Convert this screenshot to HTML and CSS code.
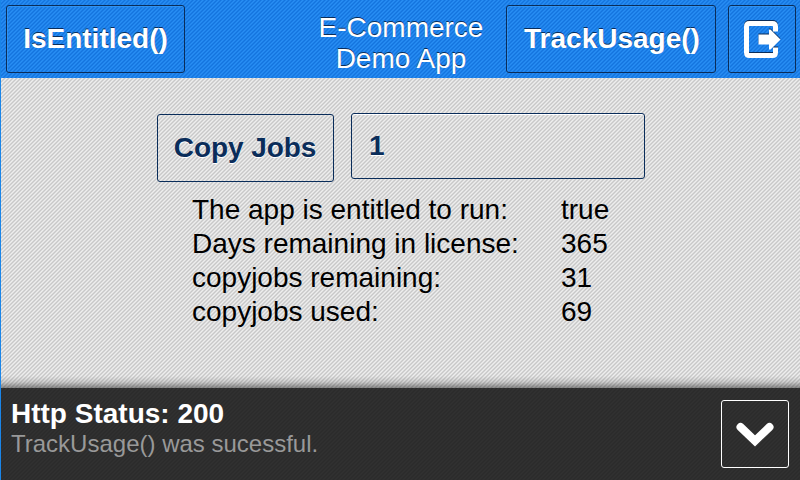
FILE: index.html
```html
<!DOCTYPE html>
<html lang="en">
<head>
<meta charset="utf-8">
<title>E-Commerce Demo App</title>
<link rel="stylesheet" href="styles.css">
</head>
<body>
<div class="app">
  <header class="toolbar">
    <button class="btn entitled">IsEntitled()</button>
    <h1 class="title">E-Commerce<br>Demo App</h1>
    <button class="btn track">TrackUsage()</button>
    <button class="btn exit" aria-label="Exit">
      <svg width="40" height="40" viewBox="0 0 40 40">
        <path d="M33.500 12.500V7.500Q33.500 4.500 30.500 4.500H7.500Q4.500 4.500 4.500 7.500V33.500Q4.500 36.500 7.500 36.500H30.500Q33.500 36.500 33.500 33.500V28.500" fill="none" stroke="#fff" stroke-width="5"/>
        <path d="M16.500 15.500H27V10.500H28.500L38.500 20.500L28.500 30.500H27V25.500H16.500Z" fill="#fff"/>
      </svg>
    </button>
  </header>
  <main class="content">
    <div class="form">
      <button class="btn copy">Copy Jobs</button>
      <input class="field" type="text" value="1" aria-label="Copy jobs count">
    </div>
    <dl class="facts">
      <dt>The app is entitled to run:</dt><dd>true</dd>
      <dt>Days remaining in license:</dt><dd>365</dd>
      <dt>copyjobs remaining:</dt><dd>31</dd>
      <dt>copyjobs used:</dt><dd>69</dd>
    </dl>
  </main>
  <footer class="status">
    <div class="status-text">
      <div class="status-title">Http Status: 200</div>
      <div class="status-message">TrackUsage() was sucessful.</div>
    </div>
    <button class="btn collapse" aria-label="Collapse">
      <svg width="40" height="28" viewBox="0 0 40 28">
        <path d="M5.500 7L20 21L34.500 7" fill="none" stroke="#fff" stroke-width="8" stroke-linecap="round"/>
      </svg>
    </button>
  </footer>
</div>
</body>
</html>
```

FILE: styles.css
```css
* { box-sizing: border-box; }
body {
  margin: 0;
  background: #1a85e8;
  font-family: "Liberation Sans", Arial, sans-serif;
  font-size: 28px;
}
.app {
  display: flex;
  flex-direction: column;
  width: 800px;
  height: 480px;
  padding-left: 1px;
  overflow: hidden;
}
.btn {
  display: flex;
  align-items: center;
  justify-content: center;
  height: 68px;
  padding: 0;
  border: 1px solid #0a2d5a;
  border-radius: 3px;
  background: none;
  font: bold 28px/32px "Liberation Sans", Arial, sans-serif;
  white-space: nowrap;
}
.toolbar {
  display: flex;
  flex: none;
  height: 78px;
  padding: 5px 4px 0 5px;
  color: #fff;
  text-shadow: 0 -1px 0 #0a2d5a;
  background: linear-gradient(135deg, #1474de, #288ef4 25%, #1474de 50%, #288ef4 75%, #1474de) 0 0 / 4px 4px;
}
.toolbar .btn {
  color: #fff;
  text-shadow: 0 -1px 0 #0a2d5a;
  box-shadow: inset 1px 1px 0 #3092f2;
}
.entitled { width: 179px; }
.title {
  flex: 1;
  margin: 7px 0 0 111px;
  font-size: 28px;
  font-weight: normal;
  line-height: 31px;
  text-align: center;
}
.track { width: 210px; margin-right: 12px; }
.toolbar .track { padding-left: 2px; }
.exit { width: 68px; }
.exit svg { filter: drop-shadow(0 -1px 0 #0a2d5a); }
.content {
  flex: 1;
  padding: 35px 0 0 156px;
  background:
    linear-gradient(to top, rgba(0, 0, 0, .42), rgba(0, 0, 0, .12) 6px, transparent 12px),
    linear-gradient(135deg, #c8c8c8, #eee 25%, #c8c8c8 50%, #eee 75%, #c8c8c8) 0 0 / 4px 4px;
}
.form { display: flex; gap: 17px; }
.copy {
  width: 177px;
  margin-top: 1px;
  padding-right: 1px;
  color: #0a2d5a;
  letter-spacing: -0.08px;
  text-shadow: 0 1px 0 #fff;
}
.field {
  width: 294px;
  height: 66px;
  padding: 0 17px;
  border: 1px solid #0a2d5a;
  border-radius: 3px;
  background: none;
  box-shadow: inset 0 1px 0 #fff;
  color: #0a2d5a;
  font: bold 28px/32px "Liberation Sans", Arial, sans-serif;
  text-shadow: 0 1px 0 #fff;
}
.facts {
  display: grid;
  grid-template-columns: 369px auto;
  margin: 11px 0 0 35px;
  line-height: 34px;
}
.facts dd { margin: 0; }
.status {
  display: flex;
  justify-content: space-between;
  flex: none;
  height: 92px;
  padding: 12px 11px 0 10px;
  background: linear-gradient(135deg, #2b2b2b, #313131 25%, #2b2b2b 50%, #313131 75%, #2b2b2b) 0 0 / 4px 4px;
}
.status-title { margin-top: -2px; color: #fff; font-weight: bold; line-height: 32px; }
.status-message { color: #999; font-size: 24px; line-height: 28px; }
.status .btn { width: 68px; border-color: #fff; }
```
